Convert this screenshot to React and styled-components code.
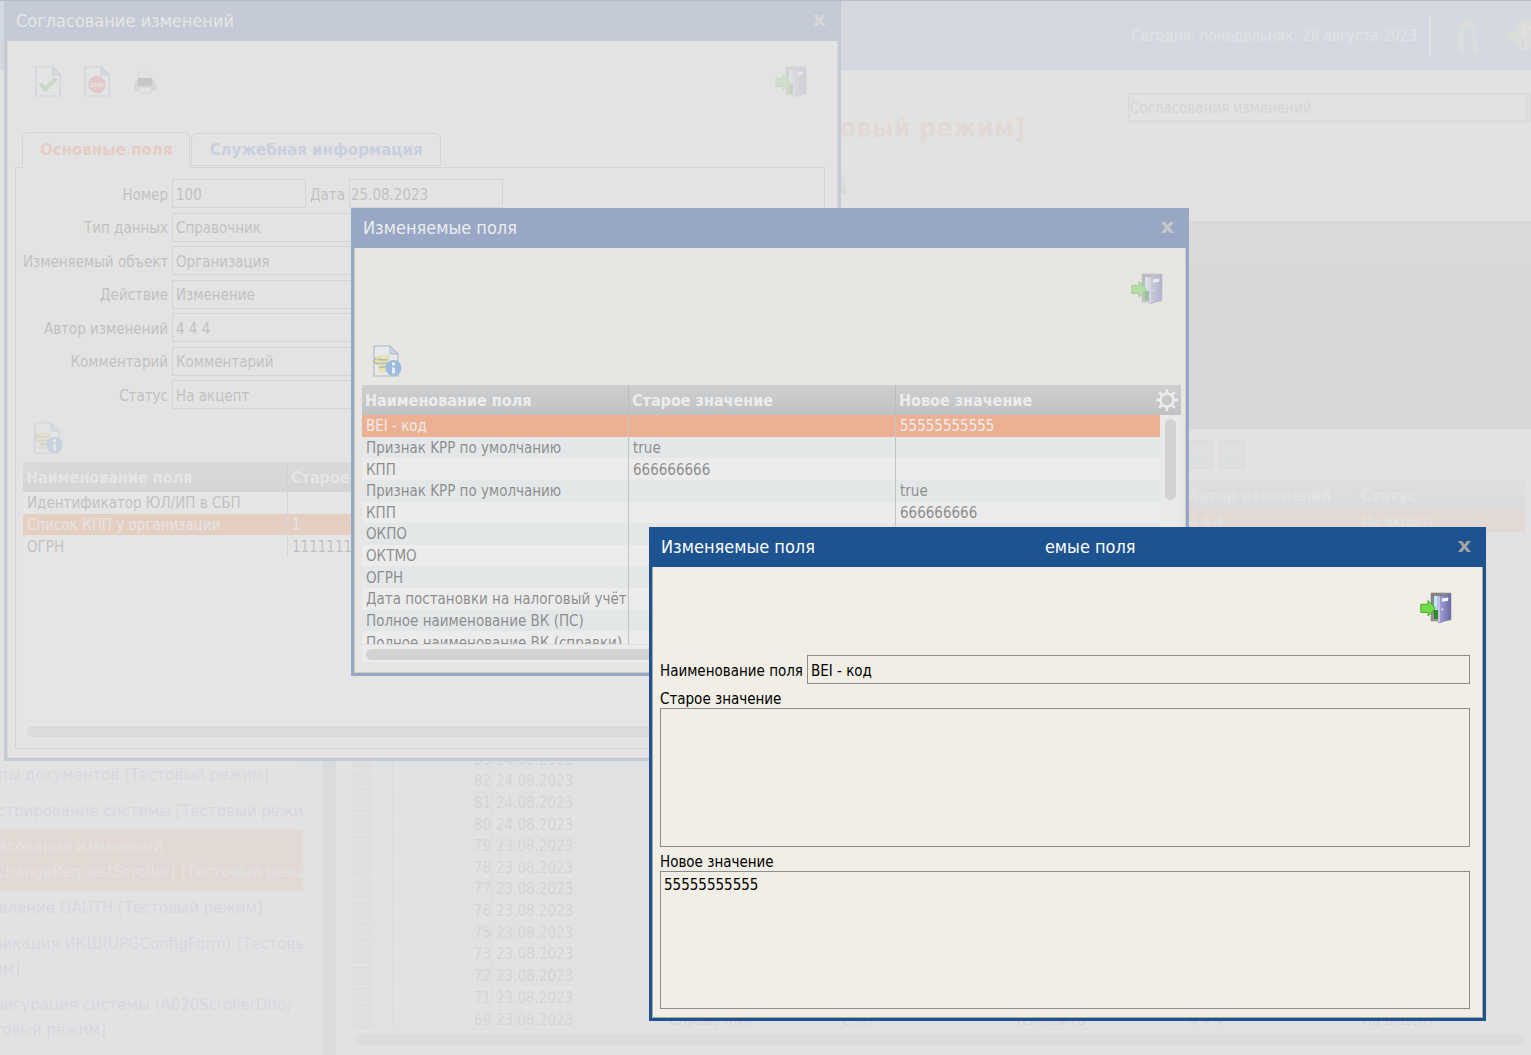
import React from 'react';
import styled, { createGlobalStyle, css } from 'styled-components';

const narrow = '"DejaVu Sans Condensed", "Noto Sans", sans-serif';
const wide = '"DejaVu Sans", sans-serif';

const GlobalStyle = createGlobalStyle`
  * { box-sizing: border-box; }
  body { margin: 0; font-family: ${narrow}; font-size: 15px; }
  input, textarea, select, button { font: inherit; color: inherit; border-radius: 0; }
  svg { display: block; flex: none; }
`;

const Screen = styled.div`
  position: relative;
  height: 100vh;
  overflow: hidden;
  border-top: 1px solid #b8bcc7;
  background: #fff;
`;

const Mask = styled.div`
  position: absolute;
  inset: 0;
  background: rgba(224, 224, 224, 0.62);
`;

/* ---------- main page ---------- */

const Page = styled.div`
  display: flex;
  flex-direction: column;
  height: 100%;
`;

const Header = styled.header`
  display: flex;
  flex: none;
  align-items: center;
  justify-content: flex-end;
  height: 69px;
  margin-right: -8px;
  color: #fff;
  background: linear-gradient(110deg, #0663f0 827px, #0030c0 827px, #0030c0 878px, #0663f0 878px);
`;

const Separator = styled.span`
  width: 2px;
  height: 40px;
  margin: 0 25px 0 12px;
  background: #fff;
`;

const HeaderButton = styled.button`
  margin-right: ${(p) => p.$gap || 0}px;
  padding: 0;
  border: 0;
  background: none;
`;

const Columns = styled.div`
  display: flex;
  flex: 1;
  min-height: 0;
`;

const Sidebar = styled.nav`
  flex: none;
  width: 303px;
  padding-top: 688px;
  overflow: hidden;
  font-family: ${wide};
`;

const MenuLink = styled.a`
  display: block;
  padding: 5px 0 6px;
  line-height: 25px;
  white-space: nowrap;
  text-decoration: none;
  color: ${(p) => (p.$active ? '#fff' : '#1a40d8')};
  background: ${(p) => (p.$active ? '#ff5a14' : 'none')};

  span { display: block; margin-left: -39px; }
`;

const Gutter = styled.div`
  flex: none;
  width: 20px;
  background: #e0e8ff;
`;

const Splitter = styled.div`
  flex: none;
  width: 13px;
  background: #6080a0;
`;

const Main = styled.main`
  flex: 1;
  min-width: 0;
  padding-left: 17px;
`;

const TitleRow = styled.div`
  display: flex;
  height: 91px;
  padding-top: 23px;
`;

const PageTitle = styled.h1`
  flex: none;
  width: 672px;
  margin: 17px 103px 0 0;
  font-size: 27px;
  line-height: 36px;
  text-align: right;
  white-space: nowrap;
  color: #ff5a14;
`;

const PageSelect = styled.select`
  flex: 1;
  height: 29px;
  padding: 0;
  appearance: none;
  border: 2px solid #777;
  border-right: 5px double #777;
  background: #fff;
`;

const PageTools = styled.div`
  display: flex;
  justify-content: flex-end;
  width: ${(p) => p.$width}px;
  height: ${(p) => p.$height}px;
  padding-top: ${(p) => p.$top}px;
  gap: 6px;
`;

const FilterPanel = styled.div`
  height: 208px;
  background: linear-gradient(#585858, #303860);
`;

const ThumbButton = styled.button`
  width: 26px;
  height: 29px;
  padding: 2px;
  border: 2px solid #888;
  background: #ccd;
`;

const PageGrid = styled.div`
  position: relative;
  width: 1172px;
`;

const PageGear = styled.div`
  position: absolute;
  top: 3px;
  right: -20px;
`;

const Check = styled.input`
  display: block;
  width: 18px;
  height: 18px;
  margin: 0;
  appearance: none;
  border: 1px solid #8a8a8a;
  background: #d4d4e0;
`;

const PageScroll = styled.div`
  height: 11px;
  margin: 4px 6px 0 1px;
  border-radius: 6px;
  background: #999;
`;

/* ---------- tables ---------- */

const Table = styled.table`
  width: 100%;
  height: ${(p) => p.$height}px;
  table-layout: fixed;
  border-collapse: separate;
  border-spacing: 0;
`;

const HeadCell = styled.th`
  height: 30px;
  padding: 2px 3px 0;
  overflow: hidden;
  font-size: 16px;
  line-height: 20px;
  text-align: left;
  white-space: nowrap;
  color: #fff;
  background: linear-gradient(#afb4b8, #8b9094);
  border-right: ${(p) => (p.$last ? '0' : '1px solid #7c8084')};
`;

const GearCell = styled(HeadCell)`
  padding: 0;
  overflow: visible;
`;

const GearHolder = styled.div`
  display: flex;
  justify-content: flex-end;
  margin: 0 2px 0 -8px;
`;

const Row = styled.tr`
  background: #fff;

  &:nth-child(even) { background: ${(p) => (p.$cool ? '#e0f0ff' : '#e8f2f5')}; }

  ${(p) => p.$selected && css`
    color: #fff;
    && { background: #ff6213; }
  `}
`;

const Cell = styled.td`
  padding: 1px 4px 0;
  overflow: hidden;
  line-height: 20px;
  white-space: nowrap;
  border-right: ${(p) => (p.$last ? '0' : '1px solid #909498')};
`;

const CheckCell = styled(Cell)`
  padding: 0;
`;

const NumberCell = styled(Cell)`
  padding-right: 0;
  text-align: right;
`;

const TailCell = styled.td`
  padding: 0;
  background: #f8f8f8;
`;

const GridBox = styled.div`
  position: relative;
  background: #fff;
`;

const Viewport = styled.div`
  height: ${(p) => p.$height}px;
  overflow: hidden;
`;

const HScroll = styled.div`
  height: 18px;
  padding: 4px 24px 3px 4px;
  border-top: 1px solid #ddd;

  &::before {
    content: '';
    display: block;
    height: 11px;
    border-radius: 6px;
    background: #bbb;
  }
`;

const VThumb = styled.div`
  position: absolute;
  top: 34px;
  right: 5px;
  width: 11px;
  height: 81px;
  border-radius: 6px;
  background: #bbb;
`;

/* ---------- windows ---------- */

const Window = styled.section`
  --frame: ${(p) => (p.$inactive ? '#204b98' : '#1e5391')};
  --face: ${(p) => p.$face || '#f1eee6'};
  position: absolute;
  display: flex;
  flex-direction: column;
  left: ${(p) => p.$left}px;
  top: ${(p) => p.$top}px;
  width: ${(p) => p.$width}px;
  height: ${(p) => p.$height}px;
  border: solid var(--frame);
  border-width: 0 3px 3px;
  background: var(--face);
`;

const TitleBar = styled.div`
  display: flex;
  flex: none;
  align-items: center;
  height: 40px;
  padding: 0 12px 1px 9px;
  font-size: 18px;
  line-height: 21px;
  color: #fff;
  background: var(--frame);
`;

const WindowTitle = styled.h2`
  margin: 0;
  font-size: inherit;
  font-weight: normal;
  white-space: nowrap;
`;

const TitleGhost = styled.span`
  margin-left: 230px;
`;

const CloseButton = styled.button`
  margin-left: auto;
  padding: 0;
  border: 0;
  background: none;
`;

const WindowBody = styled.div`
  flex: 1;
  display: flex;
  flex-direction: column;
  padding: 0 ${(p) => p.$right || 12}px 8px 7px;
  border: solid #aaa89f;
  border-width: 0 1px 1px;
`;

const Toolbar = styled.div`
  display: flex;
  flex: none;
  align-items: flex-start;
  height: ${(p) => p.$height}px;
  padding: 25px 18px 0 20px;
  gap: 23px;
`;

const IconButton = styled.button`
  padding: 0;
  border: 0;
  background: none;
  margin-left: ${(p) => (p.$end ? 'auto' : '0')};
`;

const Tabs = styled.div`
  display: flex;
  flex: none;
  align-items: flex-end;
  margin-bottom: -1px;
  padding-left: 7px;
  gap: 1px;
`;

const Tab = styled.button`
  position: relative;
  height: ${(p) => (p.$active ? 36 : 33)}px;
  margin-bottom: ${(p) => (p.$active ? 0 : 2)}px;
  padding: ${(p) => (p.$active ? '0 17px 2px' : '1px 17px 0')};
  font-family: ${wide};
  font-size: 15px;
  font-weight: bold;
  color: ${(p) => (p.$active ? '#ff5a20' : '#3a66d8')};
  background: var(--face);
  border: 1px solid #888;
  border-bottom: ${(p) => (p.$active ? '0' : '1px solid #888')};
  border-radius: 6px 6px 0 0;
`;

const TabPanel = styled.div`
  flex: 1;
  padding: 11px 7px 0;
  border: 1px solid #888;
`;

const Form = styled.div`
  display: flex;
  flex-direction: column;
  justify-content: space-between;
  height: 230px;
  margin-bottom: 13px;
`;

const FormRow = styled.div`
  display: flex;
  align-items: center;
  gap: 4px;
`;

const Label = styled.label`
  flex: none;
  width: ${(p) => (p.$width ? `${p.$width}px` : 'auto')};
  padding-top: 2px;
  text-align: right;
  white-space: nowrap;
`;

const TextBox = styled.input`
  flex: ${(p) => (p.$width ? 'none' : '1')};
  width: ${(p) => (p.$width ? `${p.$width}px` : 'auto')};
  min-width: 0;
  height: 29px;
  padding: 2px ${(p) => (p.$tight ? 1 : 3)}px 0;
  border: 1px solid #8c8c8c;
  background: transparent;
  outline: none;
`;

const TextArea = styled.textarea`
  display: block;
  flex: 1;
  width: 100%;
  padding: 3px;
  resize: none;
  line-height: 20px;
  border: 1px solid #8c8c8c;
  background: transparent;
  outline: none;
`;

const AreaLabel = styled.label`
  flex: none;
  height: 24px;
  line-height: 30px;
`;

const DetailForm = styled.div`
  flex: 1;
  display: flex;
  flex-direction: column;
`;

const SheetButton = styled(IconButton)`
  display: block;
  margin: 0 0 8px 9px;
`;

/* ---------- icons ---------- */

const DoorIcon = () => (
  <svg width="32" height="32" viewBox="0 0 32 32">
    <defs>
      <linearGradient id="doorLeaf" x1="0" x2="1"><stop offset="0" stopColor="#aaa9dd" /><stop offset="1" stopColor="#6c6aac" /></linearGradient>
      <linearGradient id="doorFrame" x1="0" x2="1" y2="1"><stop offset="0" stopColor="#7e7e7e" /><stop offset="1" stopColor="#a8a8a8" /></linearGradient>
    </defs>
    <path d="M11 1h20v27l-14 1h-6z" fill="url(#doorFrame)" stroke="#8a8a8a" strokeWidth=".6" />
    <path d="M14 4h6v14h-6z" fill="#c9e6f8" />
    <path d="M14 18h5v9h-5z" fill="#2c8a18" />
    <path d="M18 4.5 30.5 2v25L19 31l-1-1z" fill="url(#doorLeaf)" stroke="#65639d" strokeWidth=".5" />
    <path d="M18 4.5v25.5l2 .7V4.2z" fill="#c2c2ea" />
    <path d="m22 6.6 6.2-1v3.2L22 9.8z" fill="#f4f6ff" />
    <circle cx="22.3" cy="17.5" r="1.4" fill="#e2e2e8" stroke="#77779a" strokeWidth=".5" />
    <path d="M.8 12.3H8V8.5l7.5 7.7L8 24v-3.6H.8z" fill="#6fdc48" stroke="#44aa30" strokeWidth="1" strokeLinejoin="round" />
  </svg>
);

const Paper = () => (
  <>
    <path d="M1 1h17l7 7v22H1z" fill="#f3f6ff" stroke="#7288b8" strokeWidth="1.2" />
    <path d="M17 1v8h8z" fill="#8fa6d8" stroke="#7288b8" />
  </>
);

const AcceptIcon = () => (
  <svg width="26" height="32" viewBox="0 0 26 32">
    <Paper />
    <path d="m5 17.5 5.5 5.5L21 12.5" fill="none" stroke="#3cb030" strokeWidth="4.5" />
  </svg>
);

const StopIcon = () => (
  <svg width="26" height="32" viewBox="0 0 26 32">
    <Paper />
    <path d="M9.5 10h7l5 5v7l-5 5h-7l-5-5v-7z" fill="#ee4a38" />
    <text x="13" y="20.5" textAnchor="middle" fontSize="5" fontWeight="bold" fill="#fff">STOP</text>
  </svg>
);

const PrinterIcon = () => (
  <svg width="24" height="32" viewBox="0 0 24 32">
    <path d="M6 6h8l4 4v5H6z" fill="#f4f4f8" stroke="#aaa" />
    <path d="M4 13h16l3 6v6H1v-6z" fill="#9d9d9d" />
    <path d="M5 12h14v8H5z" fill="#303030" />
    <path d="M6 21h12v6H6z" fill="#eef2ff" stroke="#8a94a8" />
  </svg>
);

const SheetInfoIcon = () => (
  <svg width="32" height="32" viewBox="0 0 32 32">
    <path d="M3 1h16l8 8v22H3z" fill="#f3f6ff" stroke="#66789e" strokeWidth="1.2" />
    <path d="M19 1v8h8z" fill="#a8c8f0" stroke="#66789e" />
    <path d="m5 11 14-1v4l-2 3-2 10-8 1 1-6-5-3z" fill="#ece46a" />
    <path d="M3 16.5c1 4 10 1 14 2M6 14.5l11 .5M8 22.500l7-1M2 17l3-4" fill="none" stroke="#777b60" strokeWidth="1.4" />
    <circle cx="22.500" cy="23" r="8" fill="#2f7fe0" />
    <path d="M21 17.500h3v3h-3zM21 22.500h3v6h-3z" fill="#fff" />
  </svg>
);

const GearIcon = () => (
  <svg width="24" height="24" viewBox="0 0 24 24" fill="none" stroke="#fff">
    <circle cx="12" cy="12" r="6.500" strokeWidth="2.600" />
    <path d="M12 1v4M12 19v4M1 12h4M19 12h4M4.200 4.200 7 7M17 17l2.800 2.800M4.200 19.800 7 17M17 7l2.800-2.800" strokeWidth="2.600" />
  </svg>
);

const CloseIcon = () => (
  <svg width="13" height="13" viewBox="0 0 13 13">
    <path d="M0 1h4l2.500 3.200L9 1h4L8.600 6.500 13 12H9L6.500 8.800 4 12H0l4.400-5.500z" fill="#a3a3a3" />
  </svg>
);

const PeopleIcon = () => (
  <svg width="26" height="42" viewBox="0 0 26 42" fill="none" opacity=".6">
    <path d="M5 38V17c0-9 9-10 11 0" stroke="#c9b7a8" strokeWidth="6" />
    <path d="M3 14C5 3 16 3 19 14" stroke="#f08020" strokeWidth="3" />
    <path d="M9 17c4-5 8-2 10 3" stroke="#3090e0" strokeWidth="4" />
    <path d="m17 22 3 17" stroke="#d8b8a8" strokeWidth="6" />
  </svg>
);

const GlobeIcon = () => (
  <svg width="24" height="24" viewBox="0 0 24 24">
    <circle cx="12" cy="12" r="11" fill="#c8d0f0" stroke="#778" />
    <path d="M1 9h22M12 1v22M17 2c5 6 5 12 0 20" fill="none" stroke="#889" />
    <path d="m14 17 4 4 6-7v10H14z" fill="#3a9a50" />
  </svg>
);

const ImageIcon = () => (
  <svg width="18" height="21" viewBox="0 0 18 21">
    <path d="M0 0h13l5 5v16H0z" fill="#c0ccff" />
    <path d="M12 0v6h6" fill="#fff" stroke="#88a" />
    <path d="m0 20 8-7 6 1-5 6z" fill="#80c060" />
  </svg>
);

/* ---------- data ---------- */

const menu = [
  ['Группы документов [Тестовый режим]'],
  ['Регистрирование системы [Тестовый режим]'],
  ['Согласования изменений', '(dboChangeRequestScroller) [Тестовый режим]'],
  ['Управление OAUTH [Тестовый режим]'],
  ['Унификация ИКШ(UPGConfigForm) [Тестовый', 'режим]'],
  ['Конфигурация системы (A020ScrollerDbo)', '[Тестовый режим]'],
];

const requestIds = [94, 93, 92, 91, 90, 89, 88, 87, 86, 85, 84, 83, 82, 81, 80, 79, 78, 77, 76, 75, 73, 72, 71, 69];
// ids are listed newest first; 79 and older were created on the 23rd
const requests = requestIds.map((id) => ({
  id,
  date: id > 79 ? '24.08.2023' : '23.08.2023',
}));

const fields = [
  ['Тип данных', 'Справочник'],
  ['Изменяемый объект', 'Организация'],
  ['Действие', 'Изменение'],
  ['Автор изменений', '4 4 4'],
  ['Комментарий', 'Комментарий'],
  ['Статус', 'На акцепт'],
];

const headings = ['Наименование поля', 'Старое значение', 'Новое значение'];

const orgRows = [
  ['Идентификатор ЮЛ/ИП в СБП', '', ''],
  ['Список КПП у организации', '1', ''],
  ['ОГРН', '1111111111111', ''],
];

const changeRows = [
  ['BEI - код', '', '55555555555'],
  ['Признак KPP по умолчанию', 'true', ''],
  ['КПП', '666666666', ''],
  ['Признак KPP по умолчанию', '', 'true'],
  ['КПП', '', '666666666'],
  ['ОКПО', '', ''],
  ['ОКТМО', '', ''],
  ['ОГРН', '', ''],
  ['Дата постановки на налоговый учёт', '', ''],
  ['Полное наименование ВК (ПС)', '', ''],
  ['Полное наименование ВК (справки)', '', ''],
];

/* ---------- parts ---------- */

const DataGrid = ({ rows, selected, tableHeight, viewHeight, columnWidth, vertical }) => (
  <GridBox>
    <Viewport $height={viewHeight}>
      <Table $height={tableHeight}>
        <colgroup>
          <col width={columnWidth} />
          <col width={columnWidth} />
          <col />
          <col width="21" />
        </colgroup>
        <thead>
          <tr>
            {headings.map((h, i) => <HeadCell key={h} $last={i === 2}>{h}</HeadCell>)}
            <GearCell $last>
              <GearHolder>{vertical && <GearIcon />}</GearHolder>
            </GearCell>
          </tr>
        </thead>
        <tbody>
          {rows.map((row, r) => (
            <Row key={r} $selected={r === selected}>
              {row.map((text, i) => <Cell key={i} $last={i === 2}>{text}</Cell>)}
              <TailCell />
            </Row>
          ))}
        </tbody>
      </Table>
    </Viewport>
    {vertical && <VThumb />}
    <HScroll />
  </GridBox>
);

const Dialog = ({ title, ghost, left, top, width = 837, height, right, inactive, face, children }) => (
  <Window $left={left} $top={top} $width={width} $height={height} $inactive={inactive} $face={face}>
    <TitleBar>
      <WindowTitle>{title}</WindowTitle>
      {ghost && <TitleGhost>{ghost}</TitleGhost>}
      <CloseButton aria-label="Закрыть"><CloseIcon /></CloseButton>
    </TitleBar>
    <WindowBody $right={right}>{children}</WindowBody>
  </Window>
);

const MainPage = () => (
  <Page>
    <Header>
      <span>Сегодня: понедельник, 28 августа 2023</span>
      <Separator />
      <HeaderButton $gap={25} aria-label="Пользователь"><PeopleIcon /></HeaderButton>
      <HeaderButton aria-label="Выход"><DoorIcon /></HeaderButton>
    </Header>
    <Columns>
      <Sidebar>
        {menu.map((lines, i) => (
          <MenuLink key={lines[0]} href="#" $active={i === 2}>
            {lines.map((line) => <span key={line}>{line}</span>)}
          </MenuLink>
        ))}
      </Sidebar>
      <Gutter />
      <Splitter />
      <Main>
        <TitleRow>
          <PageTitle>Согласования [Тестовый режим]</PageTitle>
          <PageSelect aria-label="Раздел"><option>Согласования изменений</option></PageSelect>
        </TitleRow>
        <PageTools $width={493} $height={60} $top={9}><GlobeIcon /></PageTools>
        <FilterPanel />
        <PageTools $width={892} $height={51} $top={11}>
          <ThumbButton aria-label="Принять"><ImageIcon /></ThumbButton>
          <ThumbButton aria-label="Отклонить"><ImageIcon /></ThumbButton>
        </PageTools>
        <PageGrid>
          <Table $height={550}>
            <colgroup>
              <col width="40" />
              <col width="99" />
              <col width="173" />
              <col width="173" />
              <col width="174" />
              <col width="173" />
              <col width="173" />
              <col width="167" />
            </colgroup>
            <thead>
              <tr>
                {['', 'Номер', 'Дата', 'Тип данных', 'Объект', 'Действие', 'Автор изменений', 'Статус'].map((h, i) => (
                  <HeadCell key={i} $last={i === 7}>{h}</HeadCell>
                ))}
              </tr>
            </thead>
            <tbody>
              {requests.map(({ id, date }, i) => (
                <Row key={id} $selected={i === 0} $cool>
                  <CheckCell><Check type="checkbox" aria-label={`Запись ${id}`} /></CheckCell>
                  <NumberCell>{id}</NumberCell>
                  <Cell $last>{date}</Cell>
                  <Cell $last>Справочник</Cell>
                  <Cell $last>Счёт</Cell>
                  <Cell $last>Изменить</Cell>
                  <Cell $last>4 4 4</Cell>
                  <Cell $last>На акцепт</Cell>
                </Row>
              ))}
            </tbody>
          </Table>
          <PageGear><GearIcon /></PageGear>
        </PageGrid>
        <PageScroll />
      </Main>
    </Columns>
  </Page>
);

const App = () => (
  <>
    <GlobalStyle />
    <Screen>
      <MainPage />
      <Mask />

      <Dialog title="Согласование изменений" left={4} top={0} height={760} inactive face="#eeeeee">
        <Toolbar $height={91}>
          <IconButton aria-label="Акцептовать"><AcceptIcon /></IconButton>
          <IconButton aria-label="Отказать"><StopIcon /></IconButton>
          <IconButton aria-label="Печать"><PrinterIcon /></IconButton>
          <IconButton $end aria-label="Выход"><DoorIcon /></IconButton>
        </Toolbar>
        <Tabs>
          <Tab $active>Основные поля</Tab>
          <Tab>Служебная информация</Tab>
        </Tabs>
        <TabPanel>
          <Form>
            <FormRow>
              <Label htmlFor="number" $width={145}>Номер</Label>
              <TextBox id="number" $width={134} readOnly value="100" />
              <Label htmlFor="date">Дата</Label>
              <TextBox id="date" $width={154} $tight readOnly value="25.08.2023" />
            </FormRow>
            {fields.map(([name, value], i) => (
              <FormRow key={name}>
                <Label htmlFor={`field${i}`} $width={145}>{name}</Label>
                <TextBox id={`field${i}`} readOnly value={value} />
              </FormRow>
            ))}
          </Form>
          <SheetButton aria-label="Подробно"><SheetInfoIcon /></SheetButton>
          <DataGrid rows={orgRows} selected={1} columnWidth={265} tableHeight={95} viewHeight={259} />
        </TabPanel>
      </Dialog>
      <Mask />

      <Dialog title="Изменяемые поля" left={351} top={207} width={838} height={468} right={4} inactive>
        <Toolbar $height={97}>
          <IconButton $end aria-label="Выход"><DoorIcon /></IconButton>
        </Toolbar>
        <SheetButton aria-label="Подробно"><SheetInfoIcon /></SheetButton>
        <DataGrid rows={changeRows} selected={0} columnWidth={267} tableHeight={268} viewHeight={259} vertical />
      </Dialog>
      <Mask />

      <Dialog title="Изменяемые поля" ghost="емые поля" left={649} top={526} height={494}>
        <Toolbar $height={88}>
          <IconButton $end aria-label="Выход"><DoorIcon /></IconButton>
        </Toolbar>
        <DetailForm>
          <FormRow>
            <Label htmlFor="fieldName">Наименование поля</Label>
            <TextBox id="fieldName" readOnly value="BEI - код" />
          </FormRow>
          <AreaLabel htmlFor="oldValue">Старое значение</AreaLabel>
          <TextArea id="oldValue" readOnly value="" />
          <AreaLabel htmlFor="newValue">Новое значение</AreaLabel>
          <TextArea id="newValue" readOnly value="55555555555" />
        </DetailForm>
      </Dialog>
    </Screen>
  </>
);

export default App;
